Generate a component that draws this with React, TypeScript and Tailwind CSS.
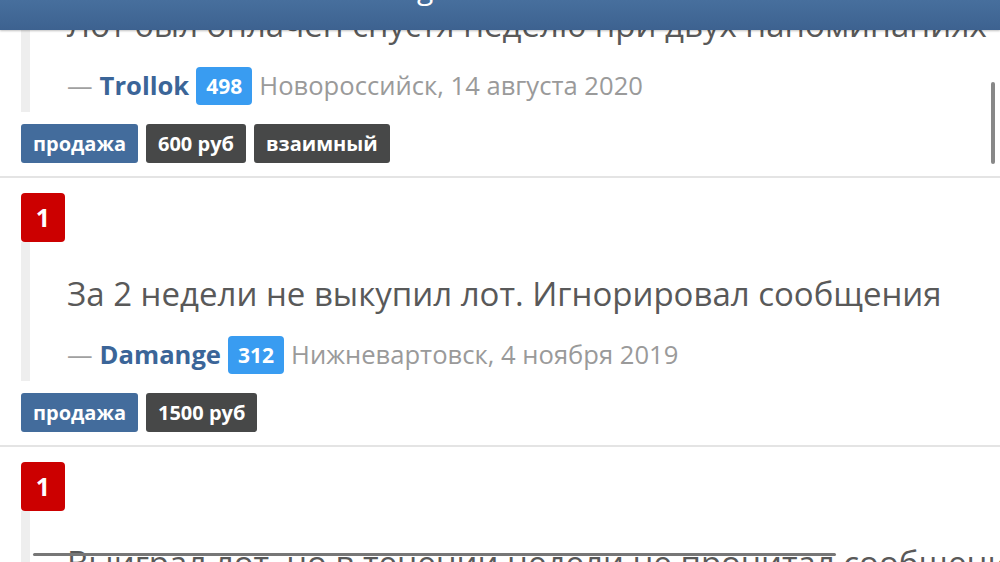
import React from "react";

type Review = {
  score: number;
  text: string;
  author: string;
  rating: number;
  place: string;
  tags: { label: string; kind: "type" | "plain" }[];
};

const reviews: Review[] = [
  {
    score: 1,
    text: "Лот был оплачен спустя неделю при двух напоминаниях",
    author: "Trollok",
    rating: 498,
    place: "Новороссийск, 14 августа 2020",
    tags: [
      { label: "продажа", kind: "type" },
      { label: "600 руб", kind: "plain" },
      { label: "взаимный", kind: "plain" },
    ],
  },
  {
    score: 1,
    text: "За 2 недели не выкупил лот. Игнорировал сообщения",
    author: "Damange",
    rating: 312,
    place: "Нижневартовск, 4 ноября 2019",
    tags: [
      { label: "продажа", kind: "type" },
      { label: "1500 руб", kind: "plain" },
    ],
  },
  {
    score: 1,
    text: "Выиграл лот, но в течении недели не прочитал сообщения",
    author: "Kolyan",
    rating: 87,
    place: "Москва, 2 марта 2019",
    tags: [{ label: "продажа", kind: "type" }],
  },
];

function ReviewItem({ r }: { r: Review }) {
  return (
    <div className="pt-[15px]">
      <div className="px-[21px]">
        <div className="flex h-[49px] w-[44px] items-center justify-center rounded-[4px] bg-[#cc0000] text-[25px] font-bold text-white">
          {r.score}
        </div>
        <div className="border-l-[9px] border-[#eeeeee] pb-[7px] pl-[37px] pt-[31px]">
          <p className="whitespace-nowrap text-[33px] leading-[42px] text-[#595959]">{r.text}</p>
          <div className="mt-[21px] flex h-[38px] items-center whitespace-nowrap text-[25.6px]">
            <span className="text-[#a0a0a0]">—</span>
            <span className="ml-[7px] font-bold text-[#3b6598]">{r.author}</span>
            <span className="ml-[7px] flex h-[38px] items-center rounded-[4px] bg-[#399cf1] px-[10px] pt-[2px] text-[21px] font-bold text-white">
              {r.rating}
            </span>
            <span className="ml-[7px] text-[#9a9a9a]">{r.place}</span>
          </div>
        </div>
        <div className="mt-[12px] flex gap-[8px]">
          {r.tags.map((t) => (
            <span
              key={t.label}
              className={`flex h-[39px] items-center rounded-[3px] px-[12px] text-[20px] font-bold text-white ${
                t.kind === "type" ? "bg-[#436c9c]" : "bg-[#474848]"
              }`}
            >
              {t.label}
            </span>
          ))}
        </div>
      </div>
      <div className="mt-[13px] border-b-2 border-[#e4e4e4]" />
    </div>
  );
}

export default function App() {
  return (
    <div
      className="relative h-[562px] w-[1000px] overflow-hidden bg-white"
      style={{ fontFamily: '"Open Sans", "Noto Sans", sans-serif' }}
    >
      {/* top bar */}
      <header className="absolute inset-x-0 top-0 z-10 h-[30px] overflow-hidden bg-gradient-to-b from-[#476f9d] to-[#3d6290] shadow-[0_1px_2px_rgba(0,0,0,0.25)]">
        <span className="absolute left-[417px] top-[-35px] text-[30px] text-white">g</span>
      </header>

      <div className="mt-[-91px]">
        {reviews.map((r, i) => (
          <ReviewItem key={i} r={r} />
        ))}
      </div>

      {/* scroll indicators */}
      <div className="absolute right-[5px] top-[82px] h-[82px] w-[4px] rounded-full bg-[#888]" />
      <div className="absolute left-[33px] top-[553px] h-[3px] w-[803px] rounded-full bg-[#777]" />
    </div>
  );
}
